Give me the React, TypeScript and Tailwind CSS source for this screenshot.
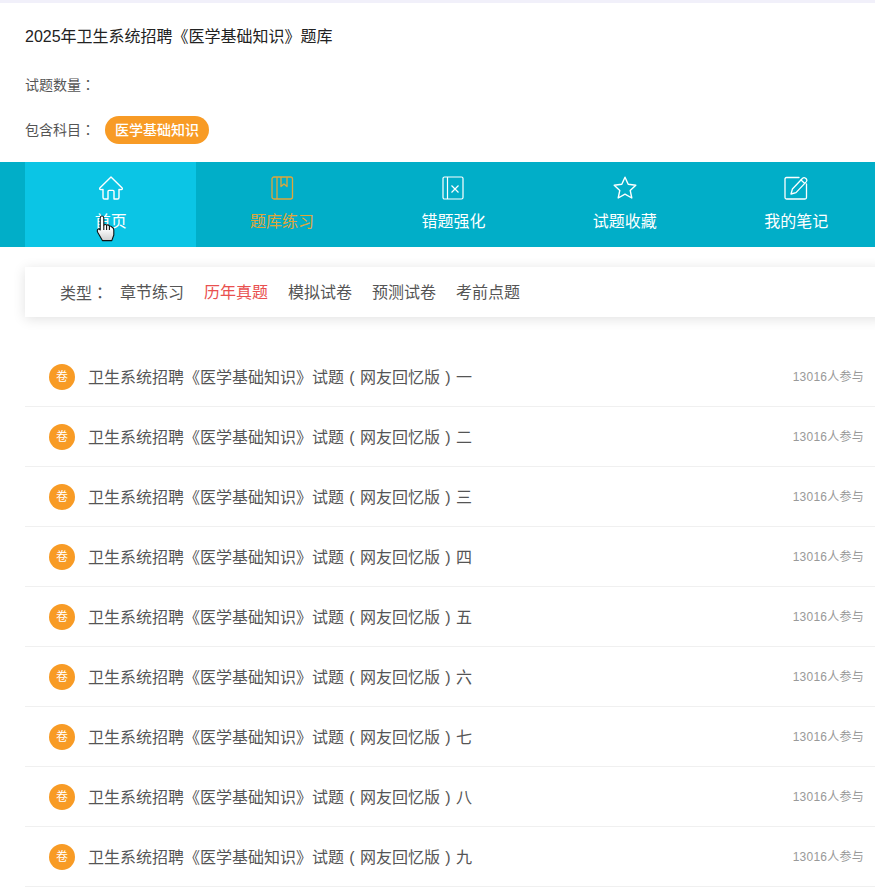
const font = { fontFamily: '"Liberation Sans", "Noto Sans CJK SC", sans-serif' };
const tcFont = { fontFamily: '"Noto Sans CJK TC", sans-serif' };

// centred full-width punctuation, as in the reference
function P({ children }: { children: string }) {
  return <span style={tcFont}>{children}</span>;
}

function Paren({ children }: { children: string }) {
  return <span className="inline-block w-4 text-center">{children}</span>;
}

function HomeIcon() {
  return (
    <svg width="26" height="26" viewBox="0 0 26 26" fill="none" stroke="currentColor" strokeWidth="1.4" strokeLinejoin="round">
      <path d="M13 2 L24.2 13 Q24.8 14.4 23.2 14.6 L21 14.4 L21 22.4 Q21 24 19.4 24 L16 24 L16 16.4 Q16 15.4 15 15.4 L11 15.4 Q10 15.4 10 16.4 L10 24 L6.6 24 Q5 24 5 22.4 L5 14.4 L2.8 14.6 Q1.2 14.4 1.8 13 Z" />
    </svg>
  );
}

function BookIcon() {
  return (
    <svg width="24" height="26" viewBox="0 0 24 26" fill="none" stroke="currentColor" strokeWidth="1.3" strokeLinejoin="round">
      <rect x="2" y="2" width="20.5" height="22" rx="2" />
      <path d="M7 2 V24" />
      <path d="M11 2 V11.5 L14 9 L17 11.5 V2" />
    </svg>
  );
}

function WrongIcon() {
  return (
    <svg width="24" height="26" viewBox="0 0 24 26" fill="none" stroke="currentColor" strokeWidth="1.2" strokeLinejoin="round">
      <rect x="2" y="2" width="20" height="22" rx="1.5" />
      <path d="M6.5 2 V24" />
      <path d="M10.5 10.5 L17.5 17.5 M17.5 10.5 L10.5 17.5" />
    </svg>
  );
}

function StarIcon() {
  return (
    <svg width="26" height="26" viewBox="0 0 26 26" fill="none" stroke="currentColor" strokeWidth="1.4" strokeLinejoin="round">
      <path d="M13 2.2 L16.2 9.2 L23.8 10.2 L18.2 15.4 L19.8 23 L13 19.2 L6.2 23 L7.8 15.4 L2.2 10.2 L9.8 9.2 Z" />
    </svg>
  );
}

function NoteIcon() {
  return (
    <svg width="26" height="26" viewBox="0 0 26 26" fill="none" stroke="currentColor" strokeWidth="1.3" strokeLinejoin="round" strokeLinecap="round">
      <path d="M16 2.5 H3.5 Q2 2.5 2 4 V22.5 Q2 24 3.5 24 H22 Q23.5 24 23.5 22.5 V9" />
      <path d="M8 19 L9.4 14 L19.6 3.2 Q21 2 22.6 3.2 L23.4 4 Q24.4 5.4 23.4 6.6 L13 17.6 Z" />
      <path d="M18 5 L21.8 8.4" />
    </svg>
  );
}

function HandCursor() {
  return (
    <svg className="absolute left-[96px] top-[215px]" width="19" height="27" viewBox="0 0 19 27" stroke="#111" strokeWidth="1.1" strokeLinejoin="round">
      <defs>
        <linearGradient id="hand" x1="0" y1="0" x2="0" y2="1">
          <stop offset="0.5" stopColor="#fff" />
          <stop offset="1" stopColor="#cfcfcf" />
        </linearGradient>
      </defs>
      <path fill="url(#hand)" d="M4.2 3 Q4.2 1 6 1 Q7.8 1 7.8 3 V10 Q9.6 9 10.6 10 Q12.6 9.6 13.4 11 Q15.4 10.8 16.2 12.4 Q17.8 12.8 17.8 15 V20 L15.8 25.6 H6.4 L1.8 17.6 Q0.6 15 2.2 14 Q3.4 13.6 4.2 15 Z" />
      <path d="M7.8 10 V15 M10.6 10 V15 M13.4 11 V15" fill="none" />
    </svg>
  );
}

const tabs = [
  { label: "首页", icon: <HomeIcon />, cls: "bg-[#0bc5e5] text-white" },
  { label: "题库练习", icon: <BookIcon />, cls: "text-[#e0a63a]" },
  { label: "错题强化", icon: <WrongIcon />, cls: "text-white" },
  { label: "试题收藏", icon: <StarIcon />, cls: "text-white" },
  { label: "我的笔记", icon: <NoteIcon />, cls: "text-white" },
];

const types = ["章节练习", "历年真题", "模拟试卷", "预测试卷", "考前点题"];
const nums = ["一", "二", "三", "四", "五", "六", "七", "八", "九"];

export default function App() {
  return (
    <div className="relative h-[894px] w-[875px] overflow-hidden bg-white" style={font}>
      <div className="h-[3px] bg-[#f1f0fa]" />

      <div className="px-[25px]">
        <h1 className="pt-[24px] text-base leading-5 font-normal text-[#222]">
          2025年卫生系统招聘《医学基础知识》题库
        </h1>
        <div className="mt-[27px] text-sm leading-5 text-[#555]">
          试题数量<P>：</P>
        </div>
        <div className="mt-[21px] flex h-[28px] items-center text-sm text-[#555]">
          <span className="w-[80px] pb-[2px]">
            包含科目<P>：</P>
          </span>
          <span className="flex h-[28px] w-[104px] items-center justify-center rounded-full bg-[#f89b25] font-medium text-white">
            医学基础知识
          </span>
        </div>
      </div>

      <nav className="mt-[18px] flex h-[85px] bg-[#01aec8] pl-[25px]">
        {tabs.map((t) => (
          <a key={t.label} className={`flex w-[171.4px] shrink-0 flex-col items-center pt-[13px] ${t.cls}`}>
            {t.icon}
            <span className="mt-[9px] text-base leading-6">{t.label}</span>
          </a>
        ))}
      </nav>

      <div className="ml-[25px] mt-[20px] flex h-[50px] w-[860px] items-center gap-[12px] bg-white pl-[35px] pt-[2px] text-base text-[#555] shadow-[0_2px_12px_rgba(0,0,0,0.12)]">
        <span className="w-[48px] whitespace-nowrap">
          类型<P>：</P>
        </span>
        <div className="flex gap-[20px]">
          {types.map((t) => (
            <span key={t} className={t === "历年真题" ? "text-[#e9504f]" : ""}>
              {t}
            </span>
          ))}
        </div>
      </div>

      <ul className="ml-[25px] mt-[30px] w-[850px]">
        {nums.map((n) => (
          <li key={n} className="flex h-[60px] items-center border-b border-[#f0f0f0] pl-[24px] pr-[11px]">
            <span className="flex h-[26px] w-[26px] items-center justify-center rounded-full bg-[#f89b25] text-xs text-white">
              卷
            </span>
            <span className="ml-[13px] pt-[2px] text-base text-[#555]">
              卫生系统招聘《医学基础知识》试题<Paren>(</Paren>网友回忆版<Paren>)</Paren>
              {n}
            </span>
            <span className="ml-auto text-xs tracking-[0.25px] text-[#999]">13016人参与</span>
          </li>
        ))}
      </ul>

      <HandCursor />
    </div>
  );
}
